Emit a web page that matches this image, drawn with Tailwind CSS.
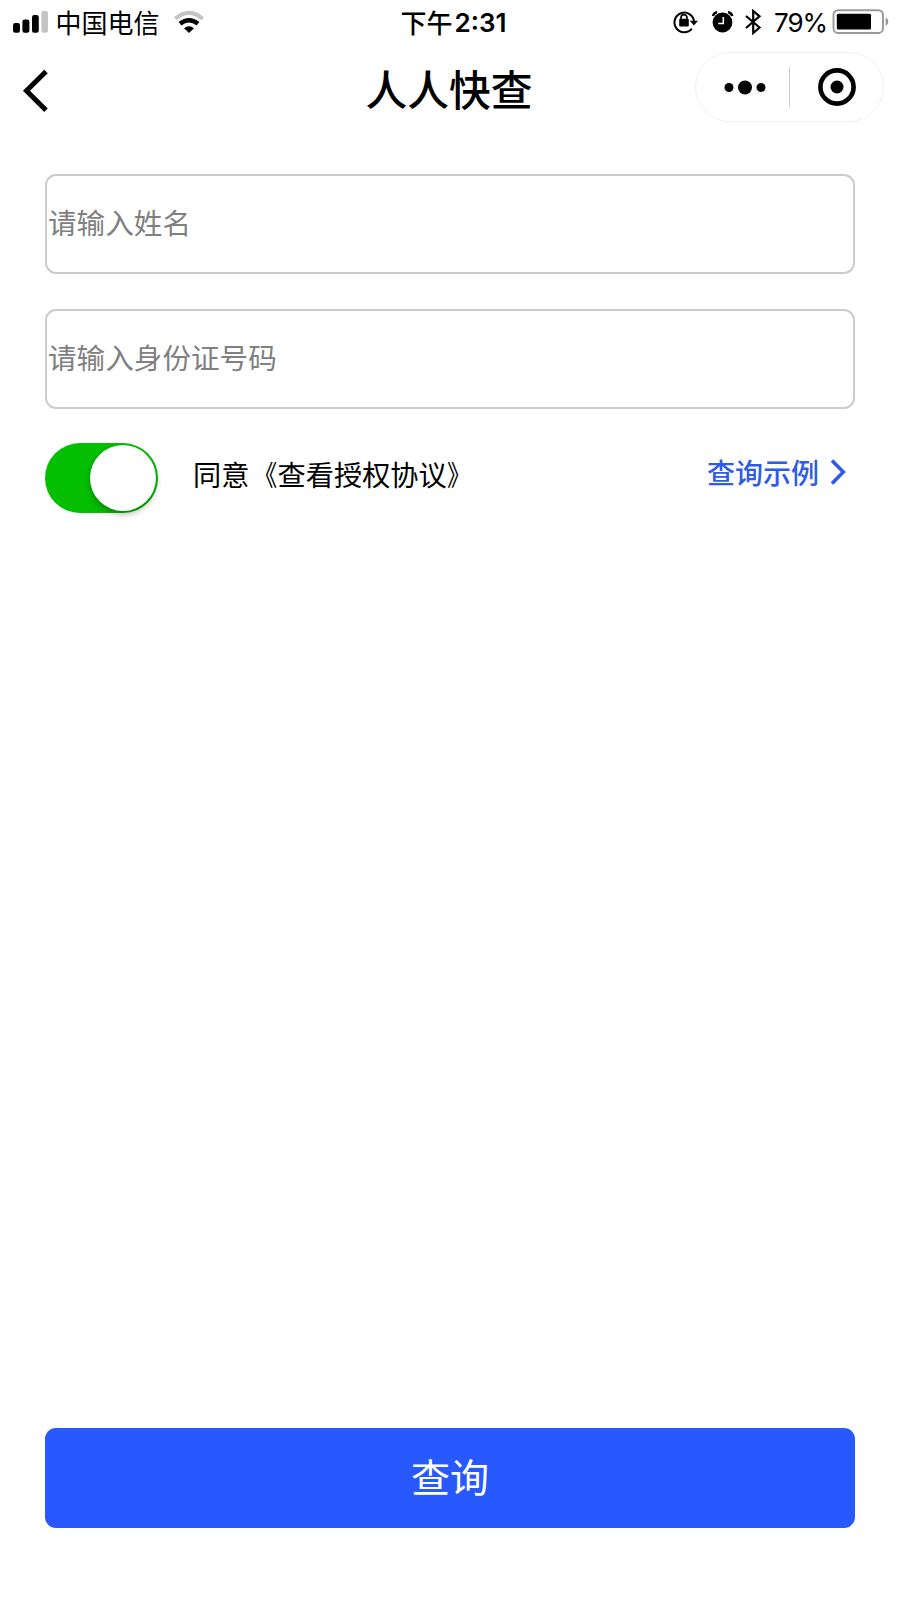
<!DOCTYPE html>
<html lang="zh-CN">
<head>
<meta charset="utf-8">
<title>人人快查</title>
<script src="https://cdn.jsdelivr.net/npm/@tailwindcss/browser@4"></script>
</head>
<body class="bg-white">
<div class="flex h-[1600px] w-[900px] flex-col overflow-hidden bg-white font-['Inter','Noto_Sans_CJK_SC',sans-serif] text-black">
  <header class="flex h-[44px] shrink-0 justify-between">
    <div class="flex w-[300px] items-start pl-[13px]">
      <svg class="mt-[11px] h-[22px] w-[36px]" viewBox="0 0 36 22">
        <rect x="0" y="12" width="7" height="9.700" rx="2.200"/>
        <rect x="9.400" y="8.500" width="7" height="13.200" rx="2.200"/>
        <rect x="19" y="4" width="6.800" height="17.700" rx="2.200"/>
        <rect x="28.400" y="0" width="6.600" height="21.700" rx="2.200" fill="#c4c4c4"/>
      </svg>
      <span class="ml-[6.500px] mt-[4px] text-[26px] leading-[40px]">中国电信</span>
      <svg class="ml-[14.500px] mt-[10px] h-[23px] w-[30px]" viewBox="0 0 30 23" fill="none">
        <path d="M1.300 8.800Q15-3 28.700 8.800" stroke="#c4c4c4" stroke-width="4"/>
        <path d="M6 13.800Q15 6.800 24 13.800" stroke="#000" stroke-width="4.400"/>
        <path d="M10 18.200Q15 14.500 20 18.200L15 23Z" fill="#000"/>
      </svg>
    </div>
    <div class="flex w-[300px] justify-center pt-[3px] pl-[7px] text-[26px] font-medium leading-[40px]"><span class="pt-px">下午</span><span class="ml-[2px] font-semibold">2:31</span></div>
    <div class="flex w-[300px] items-start justify-end pr-[11px]">
      <svg class="mt-[9px] h-[25px] w-[26px]" viewBox="0 0 26 25" fill="none">
        <path d="M18.800 19.700A9.800 9.800 0 1 1 21 12.500" stroke="#000" stroke-width="2"/>
        <path d="M16.800 11.700H25L20.900 16.500Z" fill="#000"/>
        <rect x="6.200" y="9.800" width="9.600" height="7.600" rx="1" fill="#000"/>
        <path d="M8 10.500V8.700a3 3 0 0 1 6 0v1.800" stroke="#000" stroke-width="1.700"/>
      </svg>
      <svg class="ml-[13px] mt-[11px] h-[22px] w-[22px]" viewBox="0 0 22 22" fill="none">
        <circle cx="10.500" cy="11.500" r="9.900" fill="#000"/>
        <path d="M.8 5Q1.600 2 5 1M20.300 5Q19.500 2 16 1" stroke="#000" stroke-width="2.400"/>
        <path d="M11.300 6v6.500H6.300" stroke="#fff" stroke-width="1.600"/>
      </svg>
      <svg class="ml-[11px] mt-[9px] h-[26px] w-[18px]" viewBox="0 0 18 26" fill="none" stroke="#000" stroke-width="2.200">
        <path d="M1 7L14.500 18.500L8.200 24V2L14.500 7.300L1 19"/>
      </svg>
      <span class="ml-[11px] mt-[3px] w-[52px] text-[26px] leading-[40px] tracking-[-1px]">79%</span>
      <svg class="ml-[6px] mt-[9px] h-[26px] w-[57px]" viewBox="0 0 57 26">
        <rect x="1.500" y="1.200" width="49.500" height="22.800" rx="4.500" fill="#fff" stroke="#999" stroke-width="1.900"/>
        <rect x="4.800" y="4.800" width="34.200" height="15.700" rx="1.500"/>
        <path d="M53.600 8.500Q56.300 9.500 56.300 12.700T53.600 17Z" fill="#999"/>
      </svg>
    </div>
  </header>
  <nav class="flex h-[86px] shrink-0 justify-between">
    <div class="flex w-[205px] pl-[21px] pt-[25px]">
      <svg class="h-[44px] w-[28px]" viewBox="0 0 28 44" fill="none" stroke="#000" stroke-width="5"><path d="M25 2.500L5.500 21.800L25 41.200"/></svg>
    </div>
    <h1 class="-ml-[2px] pt-[17px] text-[41.800px] font-medium leading-[60px]">人人快查</h1>
    <div class="flex w-[205px] pt-[8px]">
      <div class="flex h-[70px] w-[189px] items-center rounded-full border border-[#f0f0f0]">
        <svg class="h-[68px] w-[187px]" viewBox="0 0 187 68">
          <circle cx="33" cy="34.500" r="4.500"/><circle cx="49" cy="34.500" r="7"/><circle cx="65" cy="34.500" r="4.500"/>
          <path d="M93.500 14V54" stroke="#ccc"/>
          <circle cx="141" cy="34" r="16.600" fill="none" stroke="#000" stroke-width="4.600"/><circle cx="141" cy="34" r="6.500"/>
        </svg>
      </div>
    </div>
  </nav>
  <main class="flex grow flex-col px-[45px] pt-[44px] pb-[72px]">
    <div class="h-[100px] rounded-[11px] border-2 border-[#ccc] pt-[28px] pl-px text-[28.600px] leading-[40px] text-[#808080]">请输入姓名</div>
    <div class="mt-[35px] h-[100px] rounded-[11px] border-2 border-[#ccc] pt-[28px] pl-px text-[28.600px] leading-[40px] text-[#808080]">请输入身份证号码</div>
    <div class="mt-[34px] flex h-[70px]">
      <div class="flex h-[70px] w-[113px] items-center justify-end rounded-full bg-[#04be02] pr-[2px]">
        <div class="h-[66px] w-[66px] rounded-full bg-white shadow-[0_3px_6px_rgba(0,0,0,0.3)]"></div>
      </div>
      <span class="ml-[35px] mt-[13px] flex text-[28.200px] leading-[40px]">同意<span class="origin-right scale-x-[0.85]">《</span>查看授权协议<span class="origin-left scale-x-[0.85]">》</span></span>
      <div class="ml-auto mr-[9px] flex items-start text-[#2f5ce6]">
        <span class="mt-[11px] text-[28px] font-medium leading-[40px]">查询示例</span>
        <svg class="ml-[11px] mt-[16px] h-[26px] w-[16px]" viewBox="0 0 16 26" fill="none" stroke="currentColor" stroke-width="3.600"><path d="M2 1.500L13.300 13L2 24.500"/></svg>
      </div>
    </div>
    <button class="mt-auto h-[100px] rounded-[11px] bg-[#2858ff] text-[39px] text-white">查询</button>
  </main>
</div>
</body>
</html>
